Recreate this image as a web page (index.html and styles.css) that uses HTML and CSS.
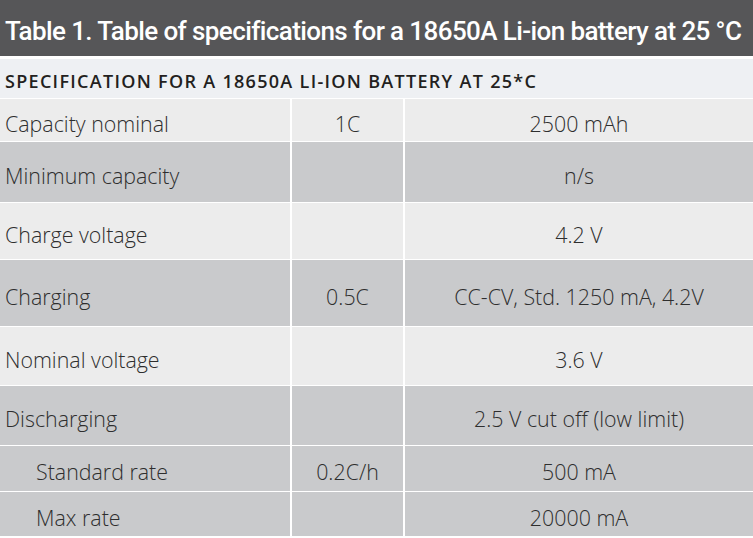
FILE: index.html
```html
<!DOCTYPE html>
<html lang="en">
<head>
<meta charset="utf-8">
<title>Table 1</title>
<link rel="stylesheet" href="styles.css">
</head>
<body>
<div class="figure">
  <h1 class="title">Table 1. Table of specifications for a 18650A Li-ion battery at 25 °C</h1>
  <div class="spec-head">SPECIFICATION FOR A 18650A LI-ION BATTERY AT 25*C</div>
  <div class="grid">
    <div class="cell label light">Capacity nominal</div>
    <div class="cell mid light">1C</div>
    <div class="cell val light">2500 mAh</div>

    <div class="cell label dark">Minimum capacity</div>
    <div class="cell mid dark"></div>
    <div class="cell val dark">n/s</div>

    <div class="cell label light">Charge voltage</div>
    <div class="cell mid light"></div>
    <div class="cell val light">4.2 V</div>

    <div class="cell label dark">Charging</div>
    <div class="cell mid dark">0.5C</div>
    <div class="cell val dark">CC-CV, Std. 1250 mA, 4.2V</div>

    <div class="cell label light">Nominal voltage</div>
    <div class="cell mid light"></div>
    <div class="cell val light">3.6 V</div>

    <div class="cell label dark">Discharging</div>
    <div class="cell mid dark"></div>
    <div class="cell val dark">2.5 V cut off (low limit)</div>

    <div class="cell label sub dark">Standard rate</div>
    <div class="cell mid dark">0.2C/h</div>
    <div class="cell val dark">500 mA</div>

    <div class="cell label sub dark">Max rate</div>
    <div class="cell mid dark"></div>
    <div class="cell val dark">20000 mA</div>
  </div>
</div>
</body>
</html>
```
FILE: styles.css
```css
html, body {
  margin: 0;
  padding: 0;
  background: #ffffff;
}

.figure {
  width: 753px;
  display: flex;
  flex-direction: column;
}

.title {
  margin: 0;
  height: 56px;
  background: #565658;
  color: #ffffff;
  font-family: Roboto, "Liberation Sans", sans-serif;
  font-weight: 500;
  font-size: 26px;
  letter-spacing: -0.6px;
  line-height: 62px;
  padding-left: 5px;
  white-space: nowrap;
  overflow: hidden;
}

.spec-head {
  margin-top: 3px;
  height: 39px;
  background: #eef0f3;
  color: #231f20;
  font-family: "Open Sans", sans-serif;
  font-weight: 600;
  font-size: 18px;
  letter-spacing: 1.3px;
  line-height: 44px;
  padding-left: 5px;
  white-space: nowrap;
}

.grid {
  margin-top: 1px;
  display: grid;
  grid-template-columns: 290px 111px 1fr;
  grid-template-rows: 42px 60px 56px 66px 58px 59px 45px 44px;
  column-gap: 2px;
  row-gap: 1px;
}

.cell {
  display: flex;
  align-items: center;
  font-family: "Open Sans", sans-serif;
  font-weight: 300;
  font-size: 21.4px;
  color: #2e2e2e;
  padding-top: 6px;
  box-sizing: border-box;
  white-space: nowrap;
}

.light { background: #ececec; }
.dark { background: #c9cacc; }

.label { padding-left: 5px; }
.label.sub { padding-left: 36px; }

.mid, .val { justify-content: center; }
```
